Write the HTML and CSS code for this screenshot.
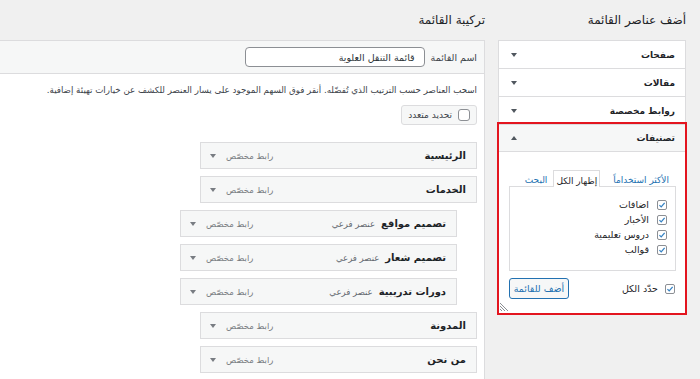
FILE: index.html
```html
<!DOCTYPE html>
<html lang="ar" dir="rtl">
<head>
<meta charset="utf-8">
<title>القوائم</title>
<link rel="stylesheet" href="styles.css">
</head>
<body>
<div class="page">
  <aside class="side">
    <h2 class="col-title">أضف عناصر القائمة</h2>
    <div class="accordion">
      <div class="acc-sec">
        <div class="acc-head"><span>صفحات</span><span class="arrow down"></span></div>
      </div>
      <div class="acc-sec">
        <div class="acc-head"><span>مقالات</span><span class="arrow down"></span></div>
      </div>
      <div class="acc-sec">
        <div class="acc-head"><span>روابط مخصصة</span><span class="arrow down"></span></div>
      </div>
      <div class="acc-sec open highlight">
        <div class="acc-head"><span>تصنيفات</span><span class="arrow up"></span></div>
        <div class="acc-body">
          <ul class="tabs">
            <li class="tab"><a href="#">الأكثر استخداماً</a></li>
            <li class="tab active">إظهار الكل</li>
            <li class="tab"><a href="#">البحث</a></li>
          </ul>
          <div class="tab-panel">
            <ul class="cat-list">
              <li><span class="cb checked"><svg viewBox="0 0 10 10"><path d="M1.8 5.2 L4 7.4 L8.3 2.3"/></svg></span>اضافات</li>
              <li><span class="cb checked"><svg viewBox="0 0 10 10"><path d="M1.8 5.2 L4 7.4 L8.3 2.3"/></svg></span>الأخبار</li>
              <li><span class="cb checked"><svg viewBox="0 0 10 10"><path d="M1.8 5.2 L4 7.4 L8.3 2.3"/></svg></span>دروس تعليمية</li>
              <li><span class="cb checked"><svg viewBox="0 0 10 10"><path d="M1.8 5.2 L4 7.4 L8.3 2.3"/></svg></span>قوالب</li>
            </ul>
          </div>
          <div class="acc-foot">
            <label class="select-all"><span class="cb checked"><svg viewBox="0 0 10 10"><path d="M1.8 5.2 L4 7.4 L8.3 2.3"/></svg></span>حدّد الكل</label>
            <button class="btn-add" type="button">أضف للقائمة</button>
          </div>
          <svg class="grip" viewBox="0 0 9 9"><path d="M0 1 L8 9 M0 4 L5 9 M0 7 L2 9"/></svg>
        </div>
      </div>
    </div>
  </aside>

  <main class="structure">
    <h2 class="col-title">تركيبة القائمة</h2>
    <div class="panel">
      <div class="panel-head">
        <label class="name-label">اسم القائمة</label>
        <input class="name-input" type="text" value="قائمة التنقل العلوية">
      </div>
      <div class="panel-body">
        <p class="instr">اسحب العناصر حسب الترتيب الذي تُفضّله. أنقر فوق السهم الموجود على يسار العنصر للكشف عن خيارات تهيئة إضافية.</p>
        <label class="bulk"><span class="cb"></span>تحديد متعدد</label>
        <ul class="menu-items">
          <li class="item"><span class="item-title">الرئيسية</span><span class="item-ctrl">رابط مخصّص<span class="arrow down"></span></span></li>
          <li class="item"><span class="item-title">الخدمات</span><span class="item-ctrl">رابط مخصّص<span class="arrow down"></span></span></li>
          <li class="item sub"><span class="item-title">تصميم مواقع</span><span class="item-sub">عنصر فرعي</span><span class="item-ctrl">رابط مخصّص<span class="arrow down"></span></span></li>
          <li class="item sub"><span class="item-title">تصميم شعار</span><span class="item-sub">عنصر فرعي</span><span class="item-ctrl">رابط مخصّص<span class="arrow down"></span></span></li>
          <li class="item sub"><span class="item-title">دورات تدريبية</span><span class="item-sub">عنصر فرعي</span><span class="item-ctrl">رابط مخصّص<span class="arrow down"></span></span></li>
          <li class="item"><span class="item-title">المدونة</span><span class="item-ctrl">رابط مخصّص<span class="arrow down"></span></span></li>
          <li class="item"><span class="item-title">من نحن</span><span class="item-ctrl">رابط مخصّص<span class="arrow down"></span></span></li>
        </ul>
      </div>
    </div>
  </main>
</div>
</body>
</html>
```

FILE: styles.css
```css
* { box-sizing: border-box; }
html, body { margin: 0; height: 100%; }
body {
  background: #f0f0f0;
  font-family: "DejaVu Sans", sans-serif;
  color: #1d2327;
  font-size: 11px;
  direction: rtl;
  overflow: hidden;
}
ul { list-style: none; margin: 0; padding: 0; }

.page {
  display: flex;
  gap: 13px;
  padding-right: 14px;
  height: 379px;
}
.side { width: 188px; flex: none; }
.structure { flex: 1; min-width: 0; display: flex; flex-direction: column; }

.col-title {
  margin: 0;
  height: 40px;
  line-height: 40px;
  font-size: 12px;
  font-weight: normal;
  color: #1d2327;
}

/* accordion */
.accordion { background: #fff; border: 1px solid #dcdcde; }
.acc-sec + .acc-sec { border-top: 1px solid #dcdcde; }
.acc-head {
  height: 27px;
  display: flex;
  align-items: center;
  justify-content: space-between;
  padding: 0 10px 0 12px;
  font-weight: bold;
  font-size: 9px;
}
.highlight { outline: 2px solid #e3151f; outline-offset: 0; position: relative; }
.open .acc-head { background: #f6f7f7; border-bottom: 1px solid #dcdcde; }

.arrow { display: inline-block; width: 0; height: 0; border-left: 3px solid transparent; border-right: 3px solid transparent; }
.arrow.down { border-top: 4px solid #50575e; }
.arrow.up { border-bottom: 4px solid #50575e; }

.acc-body { position: relative; padding: 18px 9px 14px 10px; }
.tabs { display: flex; align-items: flex-end; height: 16px; padding-right: 7px; gap: 6px; }
.tab { font-size: 9px; line-height: 12px; }
.tab a { color: #2271b1; text-decoration: none; }
.tab:first-child { margin-left: 7px; }
.tab.active {
  background: #fff;
  border: 1px solid #dcdcde;
  border-bottom: none;
  padding: 3px 2px 0;
  height: 17px;
  line-height: 14px;
  margin-bottom: -1px;
}
.tab-panel {
  border: 1px solid #dcdcde;
  height: 85px;
  padding: 10px 8px 0 0;
}
.cat-list li { display: flex; align-items: center; gap: 8px; height: 15px; font-size: 9.5px; }

.cb {
  display: inline-flex;
  align-items: center;
  justify-content: center;
  width: 10px;
  height: 10px;
  flex: none;
  border: 1px solid #8c8f94;
  border-radius: 2px;
  background: #fff;
}
.cb svg { width: 10px; height: 10px; }
.cb svg path { fill: none; stroke: #3582c4; stroke-width: 1.6; }

.acc-foot { display: flex; justify-content: space-between; align-items: center; margin-top: 7px; }
.select-all { display: flex; align-items: center; gap: 7px; font-size: 9.5px; padding-right: 1px; }
.btn-add {
  height: 21px;
  width: 60px;
  padding: 0;
  border: 1px solid #2271b1;
  border-radius: 3px;
  background: #f6f7f7;
  color: #2271b1;
  font-family: inherit;
  font-size: 9.5px;
}
.grip { position: absolute; left: 1px; bottom: 2px; width: 9px; height: 9px; }
.grip path { stroke: #8c8f94; stroke-width: 1; fill: none; }

/* structure panel */
.panel {
  flex: 1;
  background: #fff;
  border-top: 1px solid #dcdcde;
  border-right: 1px solid #dcdcde;
}
.panel-head {
  height: 33px;
  background: #f6f7f7;
  border-bottom: 1px solid #dcdcde;
  display: flex;
  align-items: center;
  gap: 6px;
  padding: 0 7px;
}
.name-label { font-size: 9.5px; color: #3c434a; }
.name-input {
  width: 180px;
  height: 20px;
  border: 1px solid #8c8f94;
  border-radius: 4px;
  padding: 0 9px;
  font-family: inherit;
  font-size: 9.5px;
  color: #2c3338;
  background: #fff;
}
.panel-body { padding: 0 7px; }
.instr { margin: 8px 0 0; line-height: 16px; font-size: 8.7px; color: #3c434a; white-space: nowrap; }
.bulk {
  margin-top: 7px;
  display: inline-flex;
  align-items: center;
  gap: 6px;
  height: 20px;
  padding: 0 6px;
  border: 1px solid #dcdcde;
  border-radius: 3px;
  background: #f6f7f7;
  font-size: 9px;
  color: #3c434a;
}
.bulk .cb { width: 12px; height: 12px; border-radius: 3px; }

.menu-items { margin-top: 17px; }
.item {
  width: 277px;
  height: 27px;
  margin-bottom: 7px;
  background: #f6f7f7;
  border: 1px solid #dcdcde;
  display: flex;
  align-items: center;
  padding: 0 10px 0 9px;
}
.item.sub { margin-right: 20px; }
.item-title { font-weight: bold; font-size: 10px; }
.item-sub { font-size: 8.5px; color: #646970; margin-right: 6px; }
.item-ctrl { margin-right: auto; display: flex; align-items: center; gap: 10px; font-size: 8.5px; color: #787c82; }
.item-ctrl .arrow.down { border-top-color: #787c82; }
```
